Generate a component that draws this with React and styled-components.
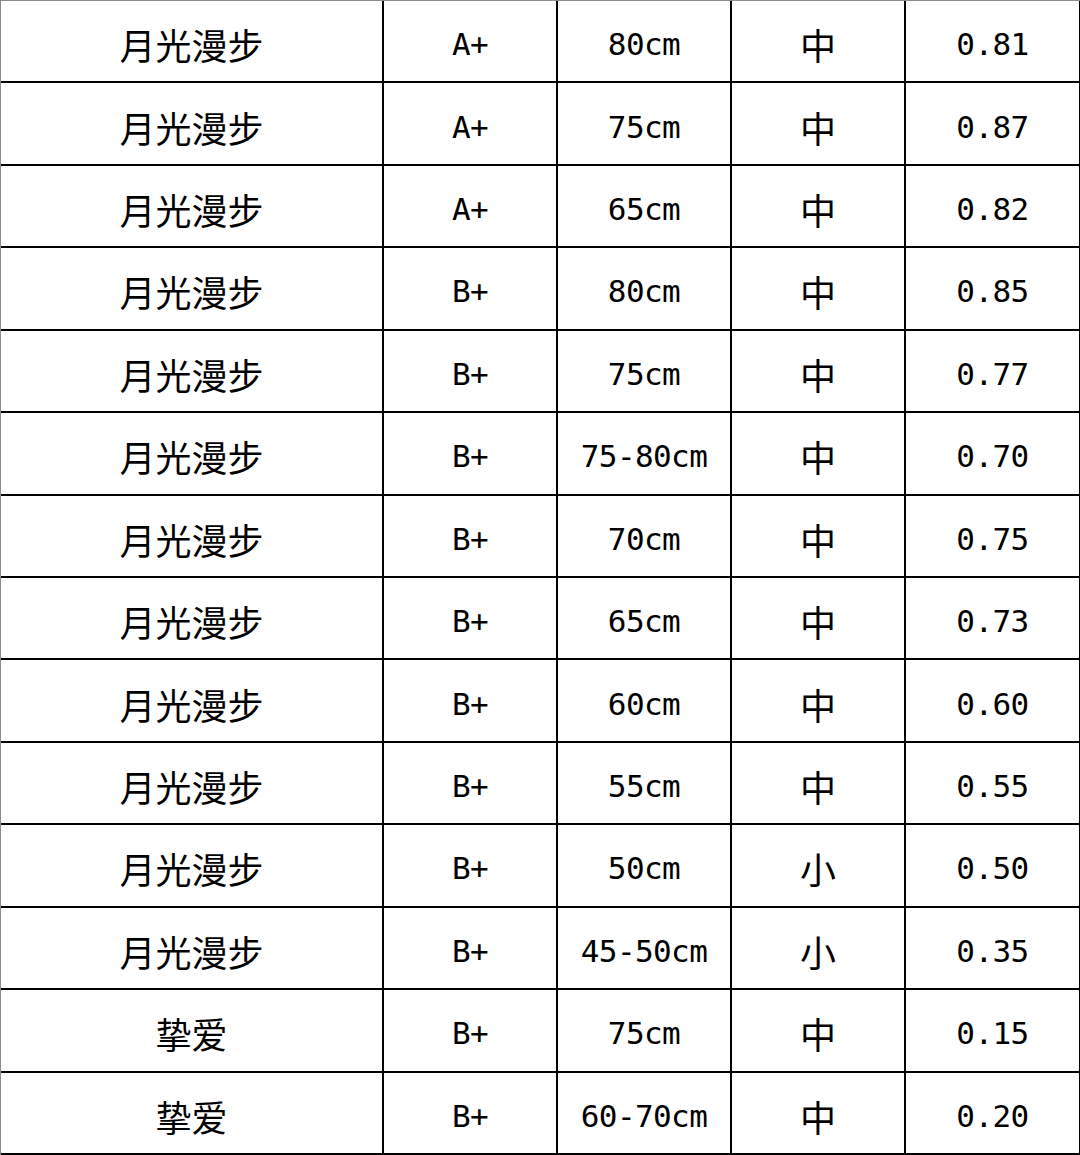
import React from "react";
import styled, { createGlobalStyle } from "styled-components";

const rows = [
  ["月光漫步", "A+", "80cm", "中", "0.81"],
  ["月光漫步", "A+", "75cm", "中", "0.87"],
  ["月光漫步", "A+", "65cm", "中", "0.82"],
  ["月光漫步", "B+", "80cm", "中", "0.85"],
  ["月光漫步", "B+", "75cm", "中", "0.77"],
  ["月光漫步", "B+", "75-80cm", "中", "0.70"],
  ["月光漫步", "B+", "70cm", "中", "0.75"],
  ["月光漫步", "B+", "65cm", "中", "0.73"],
  ["月光漫步", "B+", "60cm", "中", "0.60"],
  ["月光漫步", "B+", "55cm", "中", "0.55"],
  ["月光漫步", "B+", "50cm", "小", "0.50"],
  ["月光漫步", "B+", "45-50cm", "小", "0.35"],
  ["挚爱", "B+", "75cm", "中", "0.15"],
  ["挚爱", "B+", "60-70cm", "中", "0.20"],
];

const GlobalStyle = createGlobalStyle`
  html, body {
    margin: 0;
    padding: 0;
    background: #fff;
  }
`;

const Table = styled.div`
  width: 1080px;
  height: 1155px;
  box-sizing: border-box;
  display: grid;
  grid-template-columns: 383px 174px 174px 174px 175px;
  grid-template-rows: repeat(14, 1fr);
  border-top: 1px solid #8a8a8a;
  border-left: 1px solid #8a8a8a;
  background: #fff;
`;

const Cell = styled.div`
  box-sizing: border-box;
  display: flex;
  align-items: center;
  justify-content: center;
  padding-top: 6px;
  border-right: 2px solid #000;
  border-bottom: 2px solid #000;
  color: #000;
  font-family: ${(p) =>
    p.$cjk
      ? `"Noto Sans CJK SC", sans-serif`
      : `"DejaVu Sans Mono", "Noto Sans CJK SC", monospace`};
  font-size: ${(p) => (p.$cjk ? "36px" : "31px")};
  letter-spacing: ${(p) => (p.$cjk ? "0" : "-0.6px")};
  white-space: nowrap;
`;

export default function App() {
  return (
    <>
      <GlobalStyle />
      <Table>
        {rows.map((r, i) =>
          r.map((v, j) => (
            <Cell key={i + "-" + j} $cjk={j === 0 || j === 3}>
              {v}
            </Cell>
          ))
        )}
      </Table>
    </>
  );
}
